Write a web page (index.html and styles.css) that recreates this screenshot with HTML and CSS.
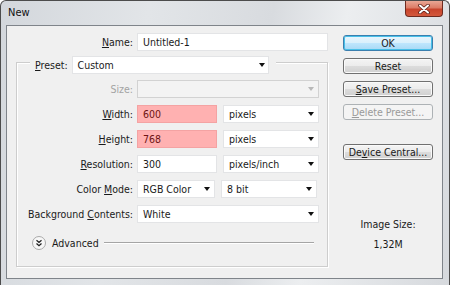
FILE: index.html
```html
<!DOCTYPE html>
<html lang="en">
<head>
  <meta charset="UTF-8">
  <title>New</title>
  <link rel="stylesheet" href="styles.css">
</head>
<body>
  <div class="window">
    <div class="titlebar">
      <span class="title">New</span>
      <div class="close">
        <svg width="14" height="10" viewBox="0 0 14 10">
          <path d="M3 1.5 L11 8.5 M11 1.5 L3 8.5" stroke="#5a2018" stroke-width="3.6" stroke-linecap="round"/>
          <path d="M3 1.5 L11 8.5 M11 1.5 L3 8.5" stroke="#fff" stroke-width="2" stroke-linecap="round"/>
        </svg>
      </div>
    </div>
    <div class="client">
      <div class="form">
        <div class="row name-row">
          <label><u>N</u>ame:</label>
          <div class="field name">Untitled-1</div>
        </div>
        <div class="group">
          <div class="preset-row">
            <label><u>P</u>reset:</label>
            <div class="field select preset">Custom<i class="arrow"></i></div>
          </div>
          <div class="row">
            <label class="off">Size:</label>
            <div class="field select full disabled"><span></span><i class="arrow"></i></div>
          </div>
          <div class="row">
            <label><u>W</u>idth:</label>
            <div class="pair">
              <div class="field num error">600</div>
              <div class="field select unit">pixels<i class="arrow"></i></div>
            </div>
          </div>
          <div class="row">
            <label><u>H</u>eight:</label>
            <div class="pair">
              <div class="field num error">768</div>
              <div class="field select unit">pixels<i class="arrow"></i></div>
            </div>
          </div>
          <div class="row">
            <label><u>R</u>esolution:</label>
            <div class="pair">
              <div class="field num">300</div>
              <div class="field select unit">pixels/inch<i class="arrow"></i></div>
            </div>
          </div>
          <div class="row">
            <label>Color <u>M</u>ode:</label>
            <div class="pair">
              <div class="field select mode">RGB Color<i class="arrow"></i></div>
              <div class="field select unit">8 bit<i class="arrow"></i></div>
            </div>
          </div>
          <div class="row">
            <label>Background <u>C</u>ontents:</label>
            <div class="field select full">White<i class="arrow"></i></div>
          </div>
          <div class="advanced">
            <span class="toggle">
              <svg width="14" height="14" viewBox="0 0 14 14">
                <circle cx="7" cy="7" r="6.5" fill="#f7f7f7" stroke="#a9a9a9"/>
                <path d="M4.5 4.3 L7 6.5 L9.5 4.3 M4.5 7.5 L7 9.7 L9.5 7.5" fill="none" stroke="#222" stroke-width="1.3"/>
              </svg>
            </span>
            <span>Advanced</span>
            <span class="rule"></span>
          </div>
        </div>
      </div>
      <div class="side">
        <div class="btn default">OK</div>
        <div class="btn">Reset</div>
        <div class="btn"><u>S</u>ave Preset...</div>
        <div class="btn disabled"><u>D</u>elete Preset...</div>
        <div class="btn central">De<u>v</u>ice Central...</div>
        <div class="size-info">
          <div>Image Size:</div>
          <div>1,32M</div>
        </div>
      </div>
    </div>
  </div>
</body>
</html>
```

FILE: styles.css
```css
body {
  margin: 0;
  background: #fff;
  font-family: "DejaVu Sans Condensed", "Liberation Sans", sans-serif;
  font-size: 10.5px;
  color: #1a1a1a;
}
u { text-decoration: underline; text-underline-offset: 1px; }

.window {
  width: 450px;
  height: 285px;
  box-sizing: border-box;
  border: 1px solid #4c4c4c;
  border-bottom: none;
  border-radius: 6px 6px 0 0;
  background: linear-gradient(100deg, #d3d7dc 0%, #e2e5e8 30%, #d8dbdf 55%, #eceef0 70%, #d6d9dd 100%);
  overflow: hidden;
}
.titlebar {
  height: 24px;
  display: flex;
  justify-content: space-between;
  align-items: flex-start;
}
.title {
  margin: 5px 0 0 7px;
  font-size: 11px;
  color: #111;
}
.close {
  width: 38px;
  height: 16px;
  margin-right: 6px;
  box-sizing: border-box;
  border: 1px solid #6e2a1f;
  border-top: none;
  border-radius: 0 0 4px 4px;
  background: linear-gradient(#e9a795 0%, #dc7c66 45%, #c8442c 55%, #d3583c 100%);
  display: flex;
  justify-content: center;
  align-items: center;
}

.client {
  margin: 0 6px 0 5px;
  height: 254px;
  box-sizing: border-box;
  border: 1px solid #7f848a;
  background: #f0f0f0;
  display: flex;
}

.form {
  width: 312px;
  padding: 7px 0 0 9px;
}
.row {
  display: grid;
  grid-template-columns: 116px auto;
  column-gap: 4px;
  align-items: center;
  height: 18px;
  margin-top: 7px;
}
.name-row {
  grid-template-columns: 117px auto;
  margin-top: 0;
}
label { text-align: right; white-space: nowrap; }
label.off { color: #a3a3a3; }

.field {
  height: 18px;
  box-sizing: border-box;
  border: 1px solid #e3e4e6;
  background: #fff;
  padding: 0 4px 0 5px;
  line-height: 16px;
  white-space: nowrap;
}
.name { width: 191px; }
.select {
  display: flex;
  justify-content: space-between;
  align-items: center;
}
.arrow {
  width: 0;
  height: 0;
  border-left: 3.5px solid transparent;
  border-right: 3.5px solid transparent;
  border-top: 4px solid #111;
}
.full { width: 182px; }
.disabled { background: #f3f3f3; border-color: #d2d2d2; }
.disabled .arrow { border-top-color: #b8b8b8; }
.pair { display: flex; gap: 6px; }
.num { width: 80px; }
.error { background: #ffb1b1; border-color: #f4a3a3; color: #6e1414; }
.unit { width: 96px; }
.mode { width: 78px; }

.group {
  margin-top: 11px;
  border: 1px solid #cdcdcd;
  box-shadow: inset 1px 1px 0 #fff, 1px 1px 0 #fff;
  width: 310px;
  height: 203px;
}
.preset-row {
  display: flex;
  align-items: center;
  gap: 4px;
  margin: -7px 0 -1px 13px;
  padding: 0 7px 0 5px;
  width: fit-content;
  background: #f0f0f0;
}
.preset { width: 197px; padding-right: 3px; }

.advanced {
  display: flex;
  align-items: center;
  margin: 12px 0 0 15px;
  height: 16px;
}
.toggle { display: flex; margin-right: 6px; }
.rule {
  flex: 1;
  margin: 0 13px 0 5px;
  border-top: 1px solid #a5a5a5;
  border-bottom: 1px solid #fff;
}

.side {
  margin-left: 15px;
  padding-top: 9px;
  width: 90px;
  display: flex;
  flex-direction: column;
  gap: 7px;
}
.btn {
  height: 16px;
  box-sizing: border-box;
  border: 1px solid #707070;
  border-radius: 3px;
  background: linear-gradient(#f4f4f4 0%, #ececec 48%, #dcdcdc 52%, #d0d0d0 100%);
  box-shadow: inset 0 0 0 1px #fafafa;
  text-align: center;
  line-height: 14px;
}
.btn.default {
  border-color: #3b7fae;
  background: linear-gradient(#eaf6fd 0%, #d9f0fc 48%, #bee6fd 52%, #a7d9f5 100%);
  box-shadow: inset 0 0 0 1px #48c0e8;
}
.btn.disabled {
  border-color: #adb2b5;
  background: #f4f4f4;
  box-shadow: none;
  color: #9a9a9a;
}
.central { margin-top: 17px; }
.size-info {
  margin-top: 51px;
  text-align: center;
  line-height: 13px;
  display: flex;
  flex-direction: column;
  gap: 7px;
}
```
